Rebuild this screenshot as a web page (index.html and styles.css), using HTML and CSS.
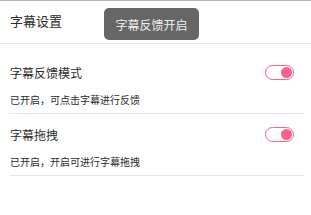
FILE: index.html
```html
<!DOCTYPE html>
<html lang="zh-CN">
<head>
    <meta charset="UTF-8">
    <meta name="viewport" content="width=device-width, initial-scale=1.0">
    <title>字幕设置</title>
    <link rel="stylesheet" href="styles.css">
</head>
<body>
    <header class="title-bar">
        <h1>字幕设置</h1>
    </header>

    <main class="settings">
        <div class="setting-row">
            <div class="setting-head">
                <span class="setting-name">字幕反馈模式</span>
                <span class="switch on"><span class="knob"></span></span>
            </div>
            <p class="setting-desc">已开启，可点击字幕进行反馈</p>
        </div>
        <div class="setting-row">
            <div class="setting-head">
                <span class="setting-name">字幕拖拽</span>
                <span class="switch on"><span class="knob"></span></span>
            </div>
            <p class="setting-desc">已开启，开启可进行字幕拖拽</p>
        </div>
    </main>

    <div class="toast">字幕反馈开启</div>
</body>
</html>
```

FILE: styles.css
```css
:root {
    --text-color: #2b2b2b;
    --line-color: #e6e6e6;
    --pink: #f2648c;
}

body {
    margin: 0;
    padding: 0;
    background: #fff;
    color: var(--text-color);
    font-family: "Noto Sans CJK SC", "Noto Sans", sans-serif;
    border-top: 1px solid #b5b5b5;
}

.title-bar {
    height: 42px;
    display: flex;
    align-items: center;
    padding: 0 10px;
    border-bottom: 1px solid var(--line-color);
}

.title-bar h1 {
    margin: 0;
    font-size: 13px;
    font-weight: normal;
    margin-top: -4px;
}

.settings {
    padding-top: 8px;
}

.setting-row {
    margin: 0 7px 0 10px;
    padding: 11px 10px 6px 0;
    border-bottom: 1px solid var(--line-color);
}

.setting-head {
    display: flex;
    justify-content: space-between;
    align-items: center;
    height: 18px;
}

.setting-name {
    font-size: 12px;
}

.setting-desc {
    margin: 12px 0 0;
    font-size: 10px;
    line-height: 14px;
}

.switch {
    width: 25px;
    height: 13px;
    border: 1.5px solid var(--pink);
    border-radius: 9px;
    display: flex;
    align-items: center;
    justify-content: flex-end;
    padding: 0 1px;
}

.knob {
    width: 11px;
    height: 11px;
    border-radius: 50%;
    background: var(--pink);
}

.toast {
    position: absolute;
    left: 104px;
    top: 8px;
    width: 95px;
    height: 32px;
    border-radius: 5px;
    background: #666;
    color: #f0f0f0;
    font-size: 12px;
    display: flex;
    align-items: center;
    justify-content: center;
}
```
